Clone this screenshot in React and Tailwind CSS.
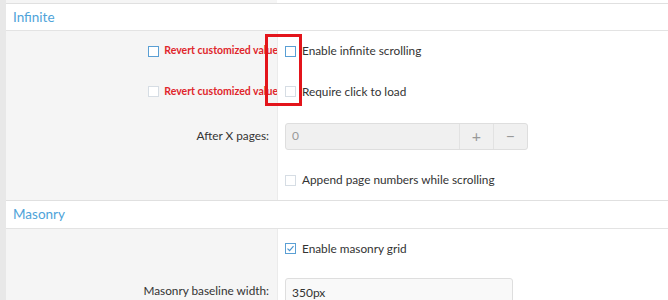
const font = { fontFamily: "Lato, 'Liberation Sans', sans-serif" };

const Check = ({ checked, faded }) => (
  <span
    className={`inline-flex items-center justify-center w-[11px] h-[11px] border bg-white ${
      faded ? "border-[#d6dde4]" : "border-[#5a9fd4]"
    }`}
  >
    {checked && (
      <svg width="9" height="9" viewBox="0 0 9 9">
        <path d="M1.5 4.6 L3.6 6.6 L7.5 2.2" fill="none" stroke="#4a94cf" strokeWidth="1.2" />
      </svg>
    )}
  </span>
);

const Row = ({ h, left, children }) => (
  <div className={`flex ${h}`}>
    <div className="w-[271px] shrink-0 bg-[#f5f5f5] flex items-center justify-end pr-[8px]">{left}</div>
    <div className="flex-1 bg-white border-l border-[#ebebeb] flex items-center pl-[7px]">{children}</div>
  </div>
);

const Revert = ({ faded }) => (
  <div className="flex items-center gap-[5px] mr-[-9px]">
    <Check faded={faded} />
    <span className="text-[10.5px] font-bold text-[#e0262b] whitespace-nowrap">Revert customized value</span>
  </div>
);

const Option = ({ label, checked, faded }) => (
  <label className="flex items-center gap-[6px] text-[11.8px] text-[#333]">
    <Check checked={checked} faded={faded} />
    <span>{label}</span>
  </label>
);

const Header = ({ title, h }) => (
  <div className={`${h} flex items-center bg-white border-b border-[#e3e3e3] pl-[7px] text-[13.5px] text-[#4ea3d9]`}>
    {title}
  </div>
);

export default function App() {
  return (
    <div className="relative w-[668px] h-[300px] overflow-hidden bg-[#e8e8e8] pl-[6px]" style={font}>
      <div className="bg-white">
        <div className="flex h-[3px]">
          <div className="w-[271px] bg-[#f5f5f5]" />
          <div className="flex-1 bg-white" />
        </div>
        <div className="border-t border-[#e0e0e0]">
          <Header title="Infinite" h="h-[27px]" />
          <Row h="h-[40px]" left={<Revert />}>
            <Option label="Enable infinite scrolling" />
          </Row>
          <Row h="h-[41px]" left={<Revert faded />}>
            <Option label="Require click to load" faded />
          </Row>
          <Row h="h-[48px]" left={<span className="text-[11.8px] text-[#333]">After X pages:</span>}>
            <div className="flex h-[27px] w-[243px] border border-[#dedede] rounded-[3px] bg-[#f0f0f0] text-[12px]">
              <span className="flex-1 flex items-center pl-[6px] text-[#999]">0</span>
              <span className="w-[34px] flex items-center justify-center border-l border-[#e2e2e2] text-[#999] text-[16px]">+</span>
              <span className="w-[34px] flex items-center justify-center border-l border-[#e2e2e2] text-[#999] text-[16px]">−</span>
            </div>
          </Row>
          <Row h="h-[40px]">
            <Option label="Append page numbers while scrolling" faded />
          </Row>
        </div>
        <div className="border-t border-[#e0e0e0]">
          <Header title="Masonry" h="h-[28px]" />
          <Row h="h-[39px]">
            <Option label="Enable masonry grid" checked />
          </Row>
          <div className="flex h-[44px]">
            <div className="w-[271px] shrink-0 bg-[#f5f5f5] flex justify-end pr-[8px] pt-[14px] text-[11.8px] text-[#333]">
              Masonry baseline width:
            </div>
            <div className="flex-1 bg-white border-l border-[#ebebeb] pl-[7px] pt-[10px]">
              <div className="h-[30px] w-[228px] border border-[#dedede] rounded-[3px] bg-[#f9f9f9] pl-[6px] pt-[5px] text-[12px] text-[#333]">
                350px
              </div>
            </div>
          </div>
        </div>
      </div>
      <div className="absolute left-[265px] top-[34px] w-[37px] h-[72px] border-[3px] border-[#e3141b]" />
    </div>
  );
}
